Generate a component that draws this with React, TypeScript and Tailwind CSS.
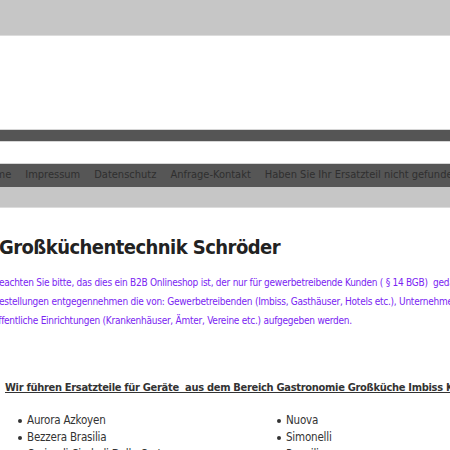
import React from "react";

const navItems = ["Home", "Impressum", "Datenschutz", "Anfrage-Kontakt", "Haben Sie Ihr Ersatzteil nicht gefunden?"];

const leftBrands = ["Aurora Azkoyen", "Bezzera Brasilia", "Carimali Cimbali Dalla Corte"];
const rightBrands = ["Nuova", "Simonelli", "Rancilio"];

export default function App() {
  return (
    <div className="w-[450px] h-[450px] overflow-hidden bg-white font-['DejaVu_Sans',sans-serif] [font-stretch:condensed]">
      {/* Kopfbereich */}
      <div className="h-[36px] bg-[#c6c6c6] border-b border-[#dcdcdc]" />
      <div className="h-[93px]" />
      <div className="h-[13px] bg-[#555555] border-y border-[#d6d6d6]" />
      <div className="h-[21px]" />

      {/* Navigation */}
      <div className="border-t border-[#d6d6d6]">
        <div className="h-[23px] bg-[#565656] flex items-center whitespace-nowrap -ml-[18px] gap-[14px] text-[11px] text-[#2f2f2f]">
          {navItems.map((item) => (
            <span key={item}>{item}</span>
          ))}
        </div>
        <div className="h-[21px] bg-[#c6c6c6] border-b border-[#dcdcdc]" />
      </div>

      {/* Inhalt */}
      <div className="whitespace-nowrap">
        <h1 className="mt-[24px] -ml-[1px] text-[20px] leading-[30px] font-bold tracking-[-0.55px] text-[#222]">
          Großküchentechnik Schröder
        </h1>
        <div className="mt-[11px] -ml-[7px] text-[10px] leading-[19px] tracking-[-0.25px] text-[#7a24f2]">
          <p>Beachten Sie bitte, das dies ein B2B Onlineshop ist, der nur für gewerbetreibende Kunden ( § 14 BGB)&nbsp; gedacht ist. Es werden nur</p>
          <p>Bestellungen entgegennehmen die von: Gewerbetreibenden (Imbiss, Gasthäuser, Hotels etc.), Unternehmen und</p>
          <p>öffentliche Einrichtungen (Krankenhäuser, Ämter, Vereine etc.) aufgegeben werden.</p>
        </div>
        <h2 className="mt-[50px] ml-[5px] text-[11px] leading-[16px] font-bold tracking-[-0.3px] underline text-[#333]">
          Wir führen Ersatzteile für Geräte&nbsp; aus dem Bereich Gastronomie Großküche Imbiss Kaffeemaschinen
        </h2>
        <div className="mt-[16px] flex text-[11.5px] leading-[17px] tracking-[-0.2px] text-[#333]">
          <ul className="w-[277px] pl-[18px]">
            {leftBrands.map((b) => (
              <li key={b} className="flex items-center gap-[5px]">
                <span className="w-[4px] h-[4px] rounded-full bg-[#333]" />
                {b}
              </li>
            ))}
          </ul>
          <ul>
            {rightBrands.map((b) => (
              <li key={b} className="flex items-center gap-[5px]">
                <span className="w-[4px] h-[4px] rounded-full bg-[#333]" />
                {b}
              </li>
            ))}
          </ul>
        </div>
      </div>
    </div>
  );
}
